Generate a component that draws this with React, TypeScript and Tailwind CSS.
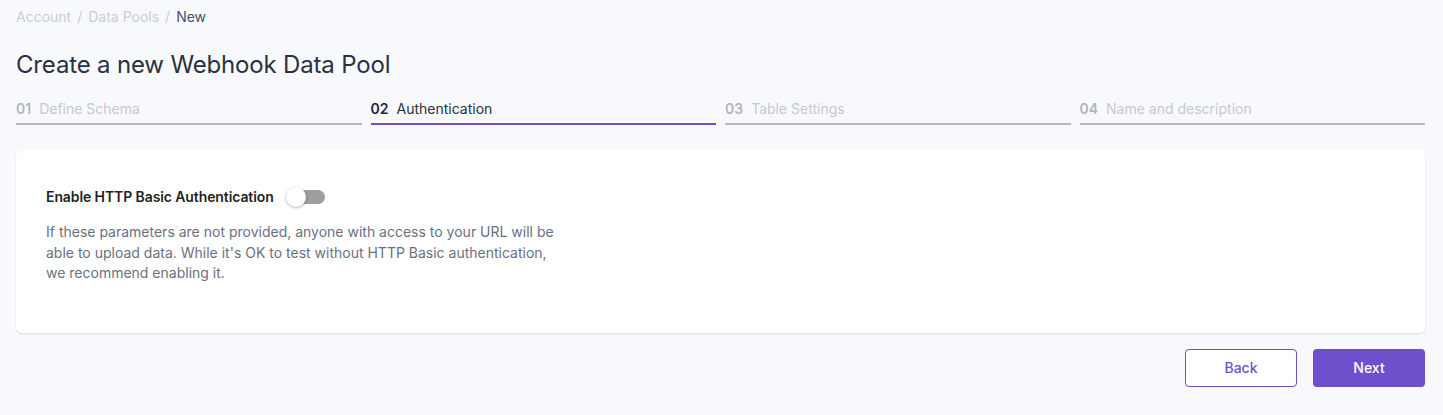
export default function App() {
  const steps = [
    { n: "01", label: "Define Schema", active: false },
    { n: "02", label: "Authentication", active: true },
    { n: "03", label: "Table Settings", active: false },
    { n: "04", label: "Name and description", active: false },
  ];

  return (
    <main
      className="min-h-[415px] bg-[#f8f9fd] pl-4 pr-[18px] pt-[8px]"
      style={{ fontFamily: "Inter, 'Noto Sans', sans-serif" }}
    >
      {/* BREADCRUMB */}
      <nav className="flex items-center gap-[6px] text-sm leading-[18px] text-[#c9ccd8]">
        <span>Account</span>
        <span>/</span>
        <span>Data Pools</span>
        <span>/</span>
        <span className="text-[#4a5064]">New</span>
      </nav>

      {/* TITLE */}
      <h1 className="mt-[24px] text-2xl leading-[30px] tracking-[-0.17px] text-[#2b3040]">
        Create a new Webhook Data Pool
      </h1>

      {/* STEPS */}
      <div className="mt-[20px] grid grid-cols-4 gap-[9px]">
        {steps.map((s) => (
          <div
            key={s.n}
            className={
              s.active
                ? "flex items-center gap-[8px] border-b-2 border-[#6e50cc] pb-[5px] text-sm leading-[18px]"
                : "flex items-center gap-[8px] border-b-2 border-[#b9b8cb] pb-[5px] text-sm leading-[18px]"
            }
          >
            <span className={s.active ? "font-semibold text-[#1f2333]" : "font-semibold text-[#b3b4bc]"}>
              {s.n}
            </span>
            <span className={s.active ? "text-[#2b3040]" : "text-[#c6c8d2]"}>{s.label}</span>
          </div>
        ))}
      </div>

      {/* CARD */}
      <section className="mt-[25px] h-[183px] rounded-md bg-white px-[30px] pt-[37px] shadow-[0_1px_2px_rgba(0,0,0,0.12)]">
        <div className="flex items-center gap-[12px]">
          <span className="text-sm font-semibold leading-[20px] tracking-[-0.1px] text-[#1f1f24]">
            Enable HTTP Basic Authentication
          </span>
          <span className="relative inline-flex h-[20px] w-[40px] items-center">
            <span className="absolute left-[3px] h-[14px] w-[36px] rounded-full bg-[#9e9e9e]" />
            <span className="absolute left-0 h-[20px] w-[20px] rounded-full bg-white shadow-[0_1px_3px_rgba(0,0,0,0.3)]" />
          </span>
        </div>
        <p className="mt-[15px] w-[520px] text-sm leading-[20.5px] text-[#6b7080]">
          If these parameters are not provided, anyone with access to your URL will be able to
          upload data. While it's OK to test without HTTP Basic authentication, we recommend
          enabling it.
        </p>
      </section>

      {/* ACTIONS */}
      <div className="mt-[16px] flex justify-end gap-4">
        <button className="h-[38px] w-[112px] rounded-[4px] border border-[#6e50cc] bg-white text-sm font-medium text-[#6e50cc]">
          Back
        </button>
        <button className="h-[38px] w-[112px] rounded-[4px] bg-[#6e50cc] text-sm font-medium text-white">
          Next
        </button>
      </div>
    </main>
  );
}
